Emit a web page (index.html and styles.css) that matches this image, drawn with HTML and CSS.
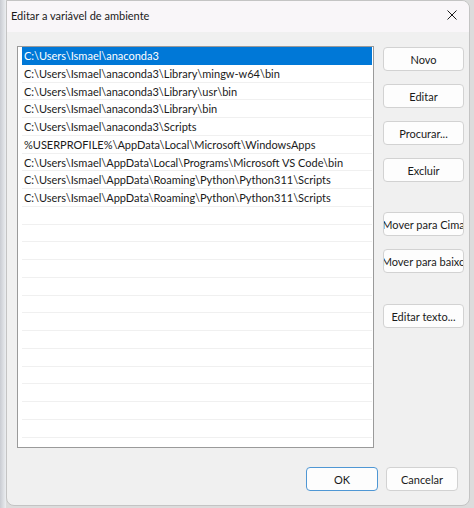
FILE: index.html
```html
<!DOCTYPE html>
<html lang="pt-BR">
<head>
    <meta charset="UTF-8">
    <meta name="viewport" content="width=device-width, initial-scale=1.0">
    <title>Editar a variável de ambiente</title>
    <link rel="stylesheet" href="styles.css">
</head>
<body>

    <div class="desk">
        <div class="back-window"></div>

        <div class="dialog">
            <div class="titlebar">
                <span class="title">Editar a variável de ambiente</span>
                <svg class="close" width="10" height="10" viewBox="0 0 10 10">
                    <path d="M0.5 0.5 L9.5 9.5 M9.5 0.5 L0.5 9.5" stroke="#1b1b1b" stroke-width="1" fill="none"/>
                </svg>
            </div>

            <div class="content">
                <div class="main">
                    <div class="list">
                        <div class="row selected">C:\Users\Ismael\anaconda3</div>
                        <div class="row">C:\Users\Ismael\anaconda3\Library\mingw-w64\bin</div>
                        <div class="row">C:\Users\Ismael\anaconda3\Library\usr\bin</div>
                        <div class="row">C:\Users\Ismael\anaconda3\Library\bin</div>
                        <div class="row">C:\Users\Ismael\anaconda3\Scripts</div>
                        <div class="row">%USERPROFILE%\AppData\Local\Microsoft\WindowsApps</div>
                        <div class="row">C:\Users\Ismael\AppData\Local\Programs\Microsoft VS Code\bin</div>
                        <div class="row">C:\Users\Ismael\AppData\Roaming\Python\Python311\Scripts</div>
                        <div class="row">C:\Users\Ismael\AppData\Roaming\Python\Python311\Scripts</div>
                        <div class="row"></div>
                        <div class="row"></div>
                        <div class="row"></div>
                        <div class="row"></div>
                        <div class="row"></div>
                        <div class="row"></div>
                        <div class="row"></div>
                        <div class="row"></div>
                        <div class="row"></div>
                        <div class="row"></div>
                        <div class="row"></div>
                        <div class="row"></div>
                        <div class="row"></div>
                        <div class="row"></div>
                    </div>

                    <div class="side">
                        <button class="btn"><span>Novo</span></button>
                        <button class="btn"><span>Editar</span></button>
                        <button class="btn"><span>Procurar...</span></button>
                        <button class="btn"><span>Excluir</span></button>
                        <button class="btn group"><span>Mover para Cima</span></button>
                        <button class="btn"><span>Mover para baixo</span></button>
                        <button class="btn group"><span>Editar texto...</span></button>
                    </div>
                </div>

                <div class="footer">
                    <button class="btn wide default"><span>OK</span></button>
                    <button class="btn wide"><span>Cancelar</span></button>
                </div>
            </div>
        </div>
    </div>

</body>
</html>
```

FILE: styles.css
```css
body {
    margin: 0;
    font-family: 'Lato', 'Liberation Sans', sans-serif;
    font-size: 11px;
    color: #1a1a1a;
    background: #dcdcdc;
    overflow: hidden;
}

.desk {
    display: flex;
    height: 508px;
}

/* window behind the dialog, only its edge shows */
.back-window {
    width: 6px;
    background: linear-gradient(to right, #c9ccd2, #eceef1);
}

.dialog {
    width: 464px;
    height: 506px;
    background: #f0f0f0;
    border-radius: 0 8px 8px 8px;
    border: 1px solid #c4c4c4;
    box-sizing: border-box;
    display: flex;
    flex-direction: column;
    overflow: hidden;
}

.titlebar {
    height: 31px;
    background: #f9f6f9;
    display: flex;
    align-items: center;
    justify-content: space-between;
    padding: 0 12px 3px 4px;
}

.title {
    font-size: 11px;
}

.content {
    flex: 1;
    display: flex;
    flex-direction: column;
    padding: 14px 5px 14px 10px;
}

.main {
    display: flex;
    gap: 9px;
}

.list {
    width: 357px;
    height: 402px;
    box-sizing: border-box;
    border: 1px solid #9a9a9a;
    background: #fff;
    padding: 0 1px 0 4px;
    overflow: hidden;
}

.row {
    height: 17.75px;
    box-sizing: border-box;
    border-bottom: 1px solid #f0f0f0;
    padding-left: 2px;
    line-height: 17px;
    white-space: nowrap;
}

.row.selected {
    background: #0078d7;
    color: #fff;
    border-bottom-color: #0078d7;
}

.side {
    display: flex;
    flex-direction: column;
    gap: 13px;
    padding-top: 1px;
}

.side .group {
    margin-top: 17px;
}

.side .group:last-child {
    margin-top: 18px;
}

.btn {
    width: 81px;
    height: 24px;
    padding: 0;
    background: #fdfdfd;
    border: 1px solid #d2d2d2;
    border-radius: 4px;
    font-family: inherit;
    font-size: 11px;
    color: #1a1a1a;
    display: flex;
    justify-content: center;
    align-items: center;
    overflow: hidden;
    white-space: nowrap;
}

.btn span {
    flex-shrink: 0;
}

.footer {
    margin-top: 19px;
    display: flex;
    justify-content: flex-end;
    gap: 8px;
    padding-right: 6px;
}

.btn.wide {
    width: 72px;
}

.btn.default {
    border-color: #4f97d4;
}
```
